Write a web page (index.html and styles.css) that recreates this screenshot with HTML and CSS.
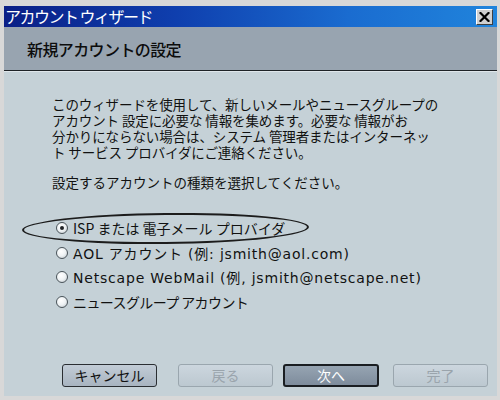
FILE: index.html
```html
<!DOCTYPE html>
<html lang="ja">
<head>
<meta charset="utf-8">
<title>アカウント ウィザード</title>
<link rel="stylesheet" href="styles.css">
</head>
<body>
<div class="window">
  <div class="titlebar">
    <span class="title">アカウント ウィザード</span>
    <span class="close">
      <svg width="11" height="10" viewBox="0 0 11 10"><path d="M1.5 1 L9.5 9 M9.5 1 L1.5 9" stroke="#000" stroke-width="2.2" stroke-linecap="square"/></svg>
    </span>
  </div>
  <div class="header">新規アカウントの設定</div>
  <div class="content">
    <div class="intro">
      <div class="line">このウィザードを使用して、新しいメールやニュースグループの</div>
      <div class="line">アカウント 設定に必要な 情報を集めます。必要な 情報がお</div>
      <div class="line">分かりにならない場合は、システム 管理者またはインターネッ</div>
      <div class="line">ト サービス プロバイダにご連絡ください。</div>
    </div>
    <p class="prompt">設定するアカウントの種類を選択してください。</p>
    <div class="options">
      <div class="option"><span class="radio checked"></span><span class="label jp isp">ISP または 電子メール プロバイダ</span></div>
      <div class="option"><span class="radio"></span><span class="label">AOL アカウント (例: jsmith@aol.com)</span></div>
      <div class="option"><span class="radio"></span><span class="label">Netscape WebMail (例, jsmith@netscape.net)</span></div>
      <div class="option"><span class="radio"></span><span class="label jp">ニュースグループ アカウント</span></div>
    </div>
    <div class="buttons">
      <span class="btn cancel">キャンセル</span>
      <span class="btn disabled back">戻る</span>
      <span class="btn primary next">次へ</span>
      <span class="btn disabled">完了</span>
    </div>
  </div>
  <div class="circle"></div>
</div>
</body>
</html>
```
FILE: styles.css
```css
html, body {
  margin: 0;
  padding: 0;
}
body {
  width: 500px;
  height: 400px;
  overflow: hidden;
  background: #dadada;
  font-family: "Noto Sans CJK JP", sans-serif;
}
.window {
  position: relative;
  width: 500px;
  height: 400px;
  box-sizing: border-box;
  padding: 6px 3px 4px 4px;
  display: flex;
  flex-direction: column;
  background: #d8d8d8;
}
.titlebar {
  height: 21px;
  flex: none;
  display: flex;
  align-items: center;
  justify-content: space-between;
  background: linear-gradient(to right, #0a1f86 0%, #0f3fae 35%, #1a6cd0 70%, #2084dc 100%);
  padding: 0 4px 0 1px;
}
.title {
  color: #fff;
  font-size: 16px;
  letter-spacing: -1.5px;
  line-height: 21px;
}
.close {
  width: 17px;
  height: 16px;
  box-sizing: border-box;
  background: #d0d0d0;
  border: 1px solid;
  border-color: #fff #404040 #404040 #fff;
  display: flex;
  align-items: center;
  justify-content: center;
}
.header {
  flex: none;
  height: 44px;
  box-sizing: border-box;
  background: #98a4b0;
  border-bottom: 1px solid #1e2226;
  padding-left: 23px;
  font-size: 16px;
  line-height: 44px;
  color: #0c0c0c;
  font-weight: 500;
  letter-spacing: -0.6px;
}
.content {
  flex: 1;
  display: flex;
  flex-direction: column;
  background: #c5d1d7;
  border-top: 1px solid #dfe6ea;
  padding: 24px 0 9px 0;
}
.intro {
  display: flex;
  flex-direction: column;
  padding-left: 48px;
}
.line, .prompt {
  height: 16px;
  font-size: 13.5px;
  line-height: 16px;
  letter-spacing: -0.1px;
  color: #111;
  white-space: nowrap;
}
.prompt {
  margin: 14px 0 0 0;
  padding-left: 48px;
  letter-spacing: 0;
}
.options {
  margin-top: 26px;
  padding-left: 52px;
  display: flex;
  flex-direction: column;
}
.option {
  height: 24.5px;
  display: flex;
  align-items: center;
}
.radio {
  width: 12px;
  height: 12px;
  box-sizing: border-box;
  border-radius: 50%;
  border: 1px solid #4a545a;
  background: radial-gradient(circle at 40% 35%, #ffffff 0%, #eef2f4 50%, #b8c0c6 100%);
  display: flex;
  align-items: center;
  justify-content: center;
  margin-right: 5px;
  flex: none;
}
.radio.checked::after {
  content: "";
  width: 4px;
  height: 4px;
  border-radius: 50%;
  background: #202428;
}
.label {
  font-family: "DejaVu Sans", "Noto Sans CJK JP", sans-serif;
  font-size: 14px;
  color: #111;
  letter-spacing: 0.8px;
}
.label.jp {
  font-family: "Noto Sans CJK JP", sans-serif;
  font-size: 14px;
  letter-spacing: -0.6px;
}
.label.isp {
  letter-spacing: 0;
}
.buttons {
  margin-top: auto;
  display: flex;
  padding-left: 58px;
}
.btn {
  width: 95px;
  height: 23px;
  box-sizing: border-box;
  border-radius: 3px;
  border: 1px solid #2a2e32;
  background: linear-gradient(to bottom, #c2ccd6 0%, #a8b4c0 100%);
  font-size: 14px;
  line-height: 21px;
  text-align: center;
  color: #111;
}
.btn.cancel {
  margin-right: 21px;
}
.btn.back {
  margin-right: 10px;
}
.btn.next {
  margin-right: 14px;
  width: 96px;
}
.btn.disabled {
  border-color: #9aa6ae;
  background: linear-gradient(to bottom, #ccd6de 0%, #bcc8d0 100%);
  color: #9aa4ac;
}
.btn.primary {
  border: 2px solid #1a1e22;
  background: linear-gradient(to bottom, #96a4b2 0%, #7e8c9c 100%);
  color: #fff;
  line-height: 19px;
}
.circle {
  position: absolute;
  left: 22px;
  top: 213px;
  width: 287px;
  height: 31px;
  box-sizing: border-box;
  border: 2px solid #1c1c1c;
  border-radius: 50%;
  transform: rotate(-0.6deg);
}
```
